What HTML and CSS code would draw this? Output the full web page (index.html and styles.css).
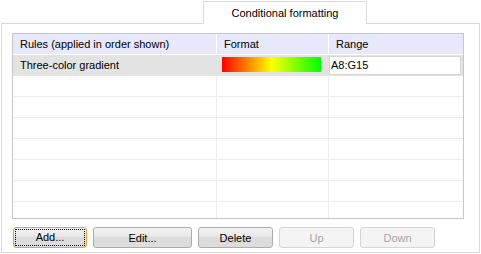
FILE: index.html
```html
<!DOCTYPE html>
<html>
<head>
  <title>Conditional formatting</title>
  <link rel="stylesheet" href="styles.css">
</head>
<body>
  <div class="tabs">
    <div class="tab">Conditional formatting</div>
  </div>
  <div class="panel">
    <div class="rules">
      <div class="row head">
        <div class="cell">Rules (applied in order shown)</div>
        <div class="cell">Format</div>
        <div class="cell">Range</div>
      </div>
      <div class="row selected">
        <div class="cell">Three-color gradient</div>
        <div class="cell"><div class="gradient"></div></div>
        <div class="cell"><input class="range" type="text" value="A8:G15"></div>
      </div>
      <div class="row"><div class="cell"></div><div class="cell"></div><div class="cell"></div></div>
      <div class="row"><div class="cell"></div><div class="cell"></div><div class="cell"></div></div>
      <div class="row"><div class="cell"></div><div class="cell"></div><div class="cell"></div></div>
      <div class="row"><div class="cell"></div><div class="cell"></div><div class="cell"></div></div>
      <div class="row"><div class="cell"></div><div class="cell"></div><div class="cell"></div></div>
      <div class="row"><div class="cell"></div><div class="cell"></div><div class="cell"></div></div>
      <div class="row"><div class="cell"></div><div class="cell"></div><div class="cell"></div></div>
    </div>
    <div class="buttons">
      <button class="btn focus"><span>Add...</span></button>
      <button class="btn wide">Edit...</button>
      <button class="btn">Delete</button>
      <button class="btn" disabled>Up</button>
      <button class="btn" disabled>Down</button>
    </div>
  </div>
</body>
</html>
```

FILE: styles.css
```css
body {
  margin: 0;
  background: #fff;
  font-family: Tahoma, "Liberation Sans", sans-serif;
  font-size: 11px;
  color: #000;
}

.tabs {
  display: flex;
  padding: 1px 0 0 203px;
}

.tab {
  width: 162px;
  height: 22px;
  line-height: 22px;
  border: 1px solid #d9d9d9;
  border-bottom: none;
  background: #fff;
  text-align: center;
  margin-bottom: -1px;
  position: relative;
}

.panel {
  margin-left: 1px;
  border: 1px solid #d9d9d9;
  padding: 9px 0 0 10px;
  box-sizing: border-box;
  width: 479px;
  height: 230px;
}

.rules {
  width: 452px;
  height: 186px;
  border: 1px solid #c6c6c6;
  box-sizing: border-box;
  overflow: hidden;
}

.row {
  display: grid;
  grid-template-columns: 204px 112px 134px;
  height: 21px;
}

.cell {
  border-right: 1px solid #ededed;
  border-bottom: 1px solid #ededed;
  padding-left: 7px;
  line-height: 21px;
  overflow: hidden;
  white-space: nowrap;
}

.cell:last-child {
  border-right: none;
}

.head {
  background: #e8e8fb;
}

.head .cell {
  border-color: #fff;
}

.selected {
  background: #e3e3e3;
}

.selected .cell {
  border-color: #e3e3e3;
}

.gradient {
  margin: 2px 0 0 -2px;
  width: 99px;
  height: 15px;
  background: linear-gradient(to right, #ff0000, #ffff00, #00ff00);
}

.range {
  display: block;
  margin: 1px 0 0 -7px;
  width: 132px;
  height: 19px;
  box-sizing: border-box;
  border: 1px solid #d6d6d6;
  background: #fff;
  font: inherit;
  padding: 0 0 0 1px;
}

.buttons {
  display: flex;
  gap: 6px;
  margin: 8px 0 0 1px;
}

.btn {
  width: 75px;
  height: 21px;
  padding: 0;
  font: inherit;
  color: #000;
  border: 1px solid #acacac;
  border-radius: 3px;
  background: linear-gradient(#f3f3f3, #e6e6e6 50%, #dcdcdc 50%, #dddddd);
}

.btn.wide {
  width: 99px;
}

.btn.focus {
  width: 74px;
  border-color: #e8a33a;
  padding: 1px;
}

.btn.focus span {
  display: block;
  height: 100%;
  border: 1px dotted #000;
  line-height: 15px;
  box-sizing: border-box;
}

.btn:disabled {
  color: #a3a3a3;
  border-color: #d5d5d5;
  background: #f4f4f4;
}
```
